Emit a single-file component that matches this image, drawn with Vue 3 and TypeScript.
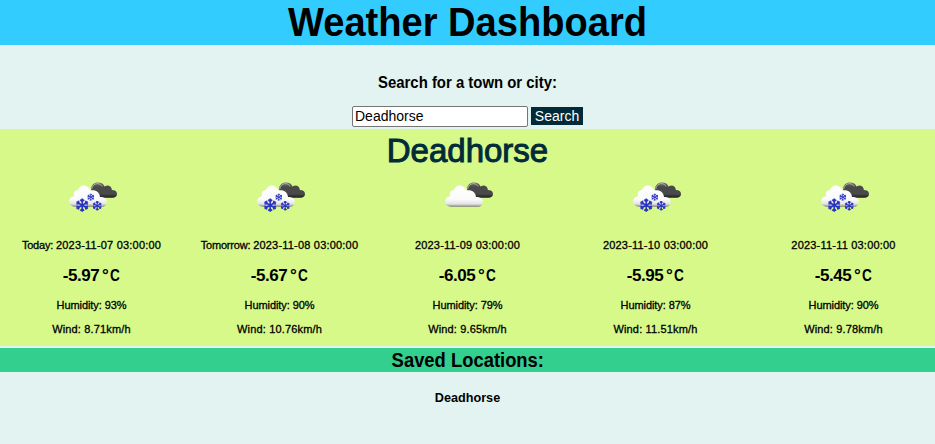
<script setup lang="ts">
import { ref } from 'vue'

interface Forecast {
  label: string
  time: string
  temp: number
  humidity: number
  wind: number
  snow: boolean
}

const query = ref('Deadhorse')
const city = ref('Deadhorse')
const saved = ref<string[]>(['Deadhorse'])

const days: Forecast[] = [
  { label: 'Today: ', time: '2023-11-07 03:00:00', temp: -5.97, humidity: 93, wind: 8.71, snow: true },
  { label: 'Tomorrow: ', time: '2023-11-08 03:00:00', temp: -5.67, humidity: 90, wind: 10.76, snow: true },
  { label: '', time: '2023-11-09 03:00:00', temp: -6.05, humidity: 79, wind: 9.65, snow: false },
  { label: '', time: '2023-11-10 03:00:00', temp: -5.95, humidity: 87, wind: 11.51, snow: true },
  { label: '', time: '2023-11-11 03:00:00', temp: -5.45, humidity: 90, wind: 9.78, snow: true },
]

const flakes = [
  { x: 15.2, y: 34.2, s: 1 },
  { x: 23.8, y: 26.2, s: 0.55 },
  { x: 30.2, y: 34.8, s: 0.72 },
]
const arms = [0, 60, 120, 180, 240, 300]

function search(): void {
  const name = query.value.trim()
  if (!name) return
  city.value = name
  if (!saved.value.includes(name)) saved.value.push(name)
}
</script>

<template>
  <div class="page">
    <header class="banner"><h1>Weather Dashboard</h1></header>

    <form class="search" @submit.prevent="search">
      <label class="prompt" for="town">Search for a town or city:</label>
      <div class="controls">
        <input id="town" v-model="query" type="text" />
        <button type="submit">Search</button>
      </div>
    </form>

    <section class="forecast">
      <h2>{{ city }}</h2>
      <div class="days">
        <article v-for="(d, i) in days" :key="d.time" class="day">
          <svg class="icon" viewBox="0 0 50 50">
            <defs>
              <linearGradient :id="'dark' + i" x1="0" y1="0" x2="0" y2="1">
                <stop offset="0" stop-color="#777" />
                <stop offset="0.3" stop-color="#484848" />
                <stop offset="0.75" stop-color="#4a4a4a" />
                <stop offset="1" stop-color="#1c1c1c" />
              </linearGradient>
              <linearGradient :id="'light' + i" x1="0" y1="0" x2="0" y2="1">
                <stop offset="0" stop-color="#fff" />
                <stop offset="0.65" stop-color="#fbfbfb" />
                <stop offset="0.87" stop-color="#e4e4e4" />
                <stop offset="0.94" stop-color="#b4b4b4" />
                <stop offset="1" stop-color="#777" />
              </linearGradient>
            </defs>
            <path
              :fill="`url(#dark${i})`"
              d="M24 19C24 14 27 11.4 31 11.4C34.5 11.4 36.5 13 37.5 15.4C41 13.2 45 15.6 44.8 19C48.2 19 50 20.5 50 23C50 25.5 48 26.7 45.5 26.7H30Z"
            />
            <path class="rim" d="M24.7 18.2C25.3 14.5 28 12.4 31 12.7C33 12.9 34.3 14 35 15.4" />
            <path
              :fill="`url(#light${i})`"
              d="M8 35.7C4.5 35.7 2.2 33.6 2.2 30.3C2.2 27.5 4.2 25.4 7 25.2C6.2 21.5 8 19 11 19C12 16 14 14.5 16.5 14.5C19.7 14.5 22.3 16.5 23.5 19.5C28.5 18.4 32.6 21.3 33 26C37.4 25.8 39.8 28 39.8 31C39.8 34 37.8 35.7 35 35.7Z"
            />
            <g v-if="d.snow" class="flakes">
              <g v-for="f in flakes" :key="f.x" :transform="`translate(${f.x} ${f.y}) scale(${f.s})`">
                <path
                  v-for="a in arms"
                  :key="a"
                  :transform="`rotate(${a})`"
                  d="M0 0V-6.6M0 -3.6L-1.9 -5.6M0 -3.6L1.9 -5.6"
                />
              </g>
            </g>
          </svg>
          <p class="small"><span v-if="d.label" class="label">{{ d.label }}</span><span class="time">{{ d.time }}</span></p>
          <p class="temp">{{ d.temp }}<span class="degree">°</span><span class="unit">C</span></p>
          <p class="small humidity">Humidity: {{ d.humidity }}%</p>
          <p class="small wind">Wind: {{ d.wind }}km/h</p>
        </article>
      </div>
    </section>

    <section class="saved">
      <h3><span class="heading">Saved Locations:</span></h3>
      <p v-for="name in saved" :key="name">{{ name }}</p>
    </section>
  </div>
</template>

<style>
body {
  background: #e2f3f1;
}
</style>

<style scoped>
.page {
  min-height: 444px;
  font-family: 'Franklin Gothic Medium', 'Liberation Sans', Arial, sans-serif;
  color: #000;
  text-align: center;
}
h1,
h2,
h3,
p {
  margin: 0;
}
.banner {
  height: 44.5px;
  background: #33ccff;
}
h1 {
  font-size: 40.5px;
  line-height: 44px;
  transform: scaleX(0.94);
}
.search {
  height: 84.5px;
}
.prompt {
  display: block;
  padding-top: 28px;
  font-size: 16px;
  font-weight: 700;
  line-height: 20px;
  transform: scaleX(0.932);
}
.controls {
  display: flex;
  justify-content: center;
  align-items: center;
  gap: 3px;
  margin-top: 13px;
}
input {
  box-sizing: border-box;
  width: 176px;
  height: 21px;
  padding: 1px 2px;
  border: 1px solid #767676;
  border-radius: 2px;
  background: #fff;
  color: #000;
  font: 14px 'Liberation Sans', Arial, sans-serif;
}
button {
  width: 52px;
  height: 18px;
  padding: 0;
  border: 0;
  background: #022b3a;
  color: #fff;
  font: 14px/18px 'Liberation Sans', Arial, sans-serif;
}
.forecast {
  height: 217px;
  background: #d7f98a;
}
h2 {
  height: 42px;
  color: #022b3a;
  font-size: 33px;
  font-weight: 400;
  line-height: 43px;
  -webkit-text-stroke: 1px #022b3a;
}
.days {
  display: grid;
  grid-template-columns: repeat(5, 1fr);
  gap: 5px;
}
.day {
  display: flex;
  flex-direction: column;
  align-items: center;
}
.icon {
  width: 50px;
  height: 50px;
}
.rim {
  fill: none;
  stroke: #bbb;
  stroke-width: 0.9;
}
.flakes {
  fill: none;
  stroke: #2a35c0;
  stroke-width: 1.6;
}
.small {
  height: 24px;
  font-size: 11px;
  line-height: 24px;
  white-space: nowrap;
  -webkit-text-stroke: 0.3px #000;
}
.label {
  white-space: pre;
  letter-spacing: -0.2px;
}
.time {
  letter-spacing: 0.2px;
}
.humidity {
  letter-spacing: -0.08px;
}
.wind {
  letter-spacing: 0.16px;
}
.icon + .small {
  margin-top: 12px;
}
.temp {
  height: 36px;
  font-size: 17px;
  font-weight: 700;
  line-height: 37px;
  letter-spacing: -0.4px;
}
.degree {
  margin: 0 2px 0 2.5px;
}
.unit {
  display: inline-block;
  width: 10px;
  transform: scaleX(0.8);
  transform-origin: left;
}
.saved {
  padding-top: 2px;
}
h3 {
  height: 24px;
  background: #33cf8f;
  font-size: 20px;
  line-height: 24px;
}
.heading {
  display: inline-block;
  transform: scaleX(0.92);
}
.saved p {
  margin-top: 15px;
  font-size: 13.6px;
  font-weight: 700;
  line-height: 21px;
  transform: scaleX(0.93);
}
</style>
